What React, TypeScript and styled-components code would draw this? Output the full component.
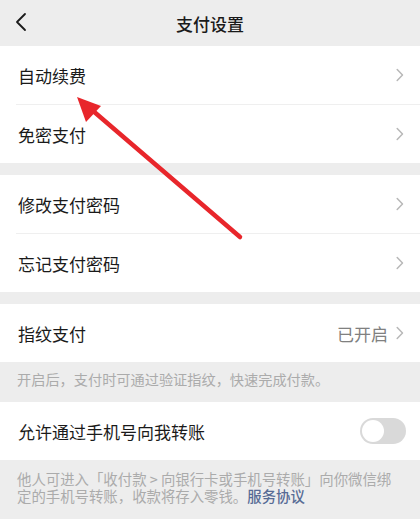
import React, { useState } from 'react'
import styled, { createGlobalStyle } from 'styled-components'

const GlobalStyle = createGlobalStyle`
  html, body { margin: 0; padding: 0; background: #ededed; }
  body { font-family: "Noto Sans CJK SC", "Noto Sans", sans-serif; -webkit-font-smoothing: antialiased; }
`

const Page = styled.div`
  position: relative;
  width: 420px;
  min-height: 519px;
  background: #ededed;
  overflow: hidden;
`

const Header = styled.div`
  height: 46px;
  display: flex;
  align-items: center;
  justify-content: center;
  position: relative;
  font-size: 17px;
  font-weight: 500;
  color: #1a1a1a;
`

const Back = styled.div`
  position: absolute;
  left: 14px;
  top: 11px;
  display: flex;
`

const Group = styled.div<{ $last?: boolean }>`
  background: #fff;
  margin-bottom: ${(p) => (p.$last ? 0 : '12px')};
`

const Row = styled.div<{ $divider?: boolean }>`
  height: 58px;
  display: flex;
  align-items: center;
  padding: 0 16px 0 18px;
  position: relative;
  font-size: 17px;
  color: #1a1a1a;
  ${(p) => p.$divider && `
    &::after {
      content: '';
      position: absolute;
      left: 16px;
      right: 0;
      bottom: -1px;
      height: 1px;
      background: #efefef;
    }
    margin-bottom: 1px;
  `}
`

const Label = styled.span`
  flex: 1;
`

const Value = styled.span`
  color: #808080;
  font-size: 17px;
  margin-right: 8px;
`

const Note = styled.div`
  padding: 8px 18px 0 17px;
  height: 40px;
  box-sizing: border-box;
  font-size: 14.2px;
  line-height: 18px;
  color: #ababab;
`

const BottomNote = styled(Note)`
  padding-top: 10px;
  height: auto;
  font-size: 14.4px;
  line-height: 17px;
`

const Link = styled.span`
  color: #576b95;
  font-weight: 500;
`

const Switch = styled.button<{ $on: boolean }>`
  width: 46px;
  height: 26px;
  border-radius: 13px;
  border: none;
  padding: 0;
  margin-right: -2px;
  background: ${(p) => (p.$on ? '#07c160' : '#d9d9d9')};
  position: relative;
  cursor: pointer;
  &::after {
    content: '';
    position: absolute;
    top: 2px;
    left: ${(p) => (p.$on ? '22px' : '2px')};
    width: 22px;
    height: 22px;
    border-radius: 50%;
    background: #fff;
    transition: left 0.2s;
  }
`

const Overlay = styled.svg`
  position: absolute;
  left: 0;
  top: 0;
  pointer-events: none;
`

const Chevron = () => (
  <svg width="8" height="14" viewBox="0 0 8 14">
    <path d="M1.2 1.5 L6.5 7 L1.2 12.5" fill="none" stroke="#b8b8b8" strokeWidth="1.5" strokeLinecap="round" strokeLinejoin="round" />
  </svg>
)

const App = () => {
  const [phone, setPhone] = useState(false)
  return (
    <Page>
      <GlobalStyle />
      <Header>
        <Back>
          <svg width="14" height="22" viewBox="0 0 14 22">
            <path d="M11 3 L3 11 L11 19" fill="none" stroke="#1a1a1a" strokeWidth="1.8" strokeLinecap="round" strokeLinejoin="round" />
          </svg>
        </Back>
        支付设置
      </Header>
      <Group>
        <Row $divider>
          <Label>自动续费</Label>
          <Chevron />
        </Row>
        <Row>
          <Label>免密支付</Label>
          <Chevron />
        </Row>
      </Group>
      <Group>
        <Row $divider>
          <Label>修改支付密码</Label>
          <Chevron />
        </Row>
        <Row>
          <Label>忘记支付密码</Label>
          <Chevron />
        </Row>
      </Group>
      <Group $last>
        <Row>
          <Label>指纹支付</Label>
          <Value>已开启</Value>
          <Chevron />
        </Row>
      </Group>
      <Note>开启后，支付时可通过验证指纹，快速完成付款。</Note>
      <Group $last>
        <Row>
          <Label>允许通过手机号向我转账</Label>
          <Switch $on={phone} onClick={() => setPhone(!phone)} />
        </Row>
      </Group>
      <BottomNote>
        他人可进入「收付款 &gt; 向银行卡或手机号转账」向你微信绑定的手机号转账，收款将存入零钱。<Link>服务协议</Link>
      </BottomNote>
      <Overlay width="420" height="519" viewBox="0 0 420 519">
        <line x1="240" y1="237" x2="92" y2="110" stroke="#e8262b" strokeWidth="4.5" strokeLinecap="round" />
        <polygon points="77,97 101,106 86,122" fill="#e8262b" />
      </Overlay>
    </Page>
  )
}

export default App
